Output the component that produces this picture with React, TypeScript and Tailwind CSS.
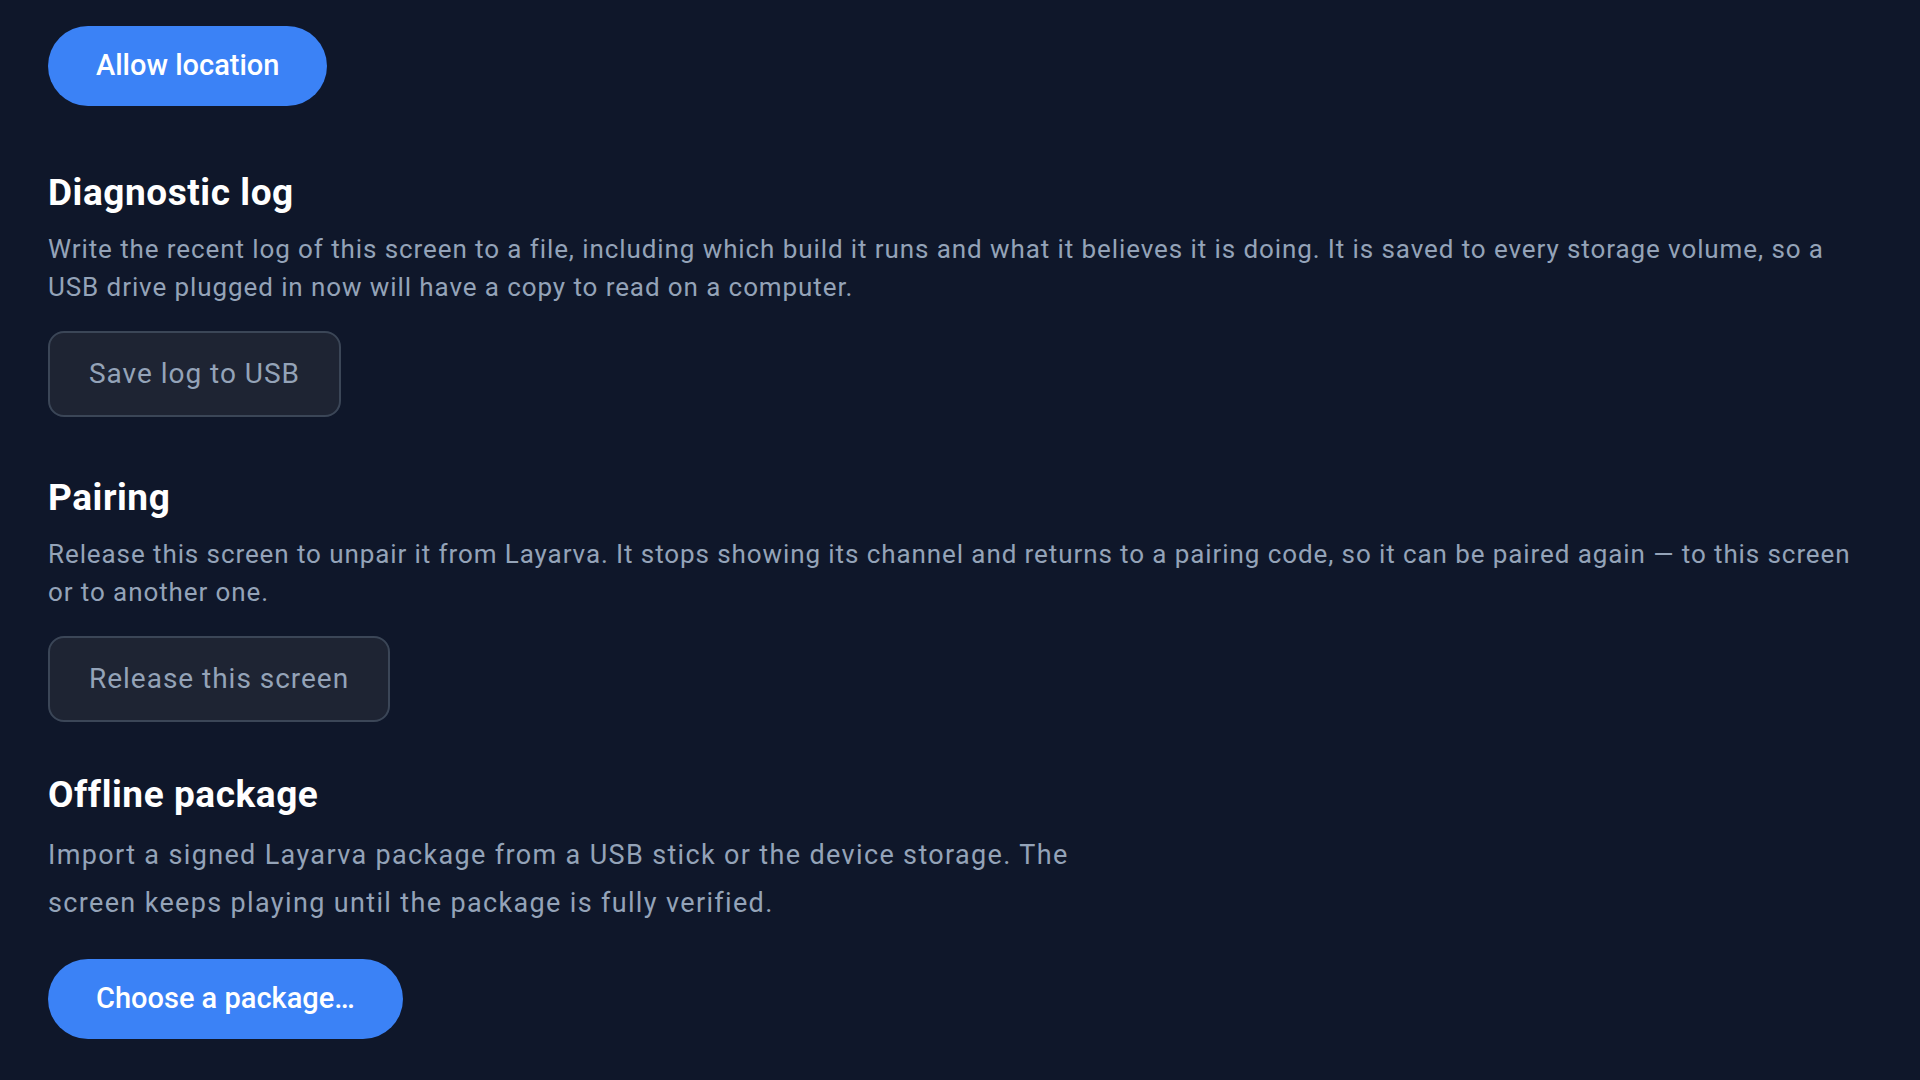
import React from 'react';

const font = { fontFamily: 'Roboto, "Noto Sans", sans-serif' };

const Section: React.FC<{ title: string; className: string; children: React.ReactNode }> = ({
  title,
  className,
  children,
}) => (
  <section className={className}>
    <h2 className="text-[37px] font-bold leading-[42px] tracking-[0.015em] text-white">{title}</h2>
    {children}
  </section>
);

export default function App() {
  return (
    <div className="min-h-screen bg-[#0f172a] px-[48px] pt-[26px]" style={font}>
      <button
        type="button"
        className="h-[80px] rounded-full bg-[#3b82f6] px-[48px] text-[29px] font-medium text-white"
      >
        Allow location
      </button>

      <Section title="Diagnostic log" className="mt-[66px]">
        <p className="mt-[16px] text-[26px] leading-[38px] tracking-[0.035em] text-[#94a3b8]">
          Write the recent log of this screen to a file, including which build it runs and what it believes it is
          doing. It is saved to every storage volume, so a USB drive plugged in now will have a copy to read on a
          computer.
        </p>
        <button
          type="button"
          className="mt-[25px] h-[86px] rounded-[16px] border-2 border-[#3b4657] bg-[#1e2433] px-[39px] text-[28px] tracking-[0.035em] text-[#94a3b8]"
        >
          Save log to USB
        </button>
      </Section>

      <Section title="Pairing" className="mt-[60px]">
        <p className="mt-[16px] text-[26px] leading-[38px] tracking-[0.035em] text-[#94a3b8]">
          Release this screen to unpair it from Layarva. It stops showing its channel and returns to a pairing code,
          so it can be paired again — to this screen or to another one.
        </p>
        <button
          type="button"
          className="mt-[25px] h-[86px] rounded-[16px] border-2 border-[#3b4657] bg-[#1e2433] px-[39px] text-[28px] tracking-[0.035em] text-[#94a3b8]"
        >
          Release this screen
        </button>
      </Section>

      <Section title="Offline package" className="mt-[52px]">
        <p className="mt-[15px] max-w-[1060px] text-[27px] leading-[48px] tracking-[0.05em] text-[#94a3b8]">
          Import a signed Layarva package from a USB stick or the device storage. The screen keeps playing until the
          package is fully verified.
        </p>
        <button
          type="button"
          className="mt-[32px] h-[80px] rounded-full bg-[#3b82f6] px-[48px] text-[29px] font-medium text-white"
        >
          Choose a package…
        </button>
      </Section>
    </div>
  );
}
